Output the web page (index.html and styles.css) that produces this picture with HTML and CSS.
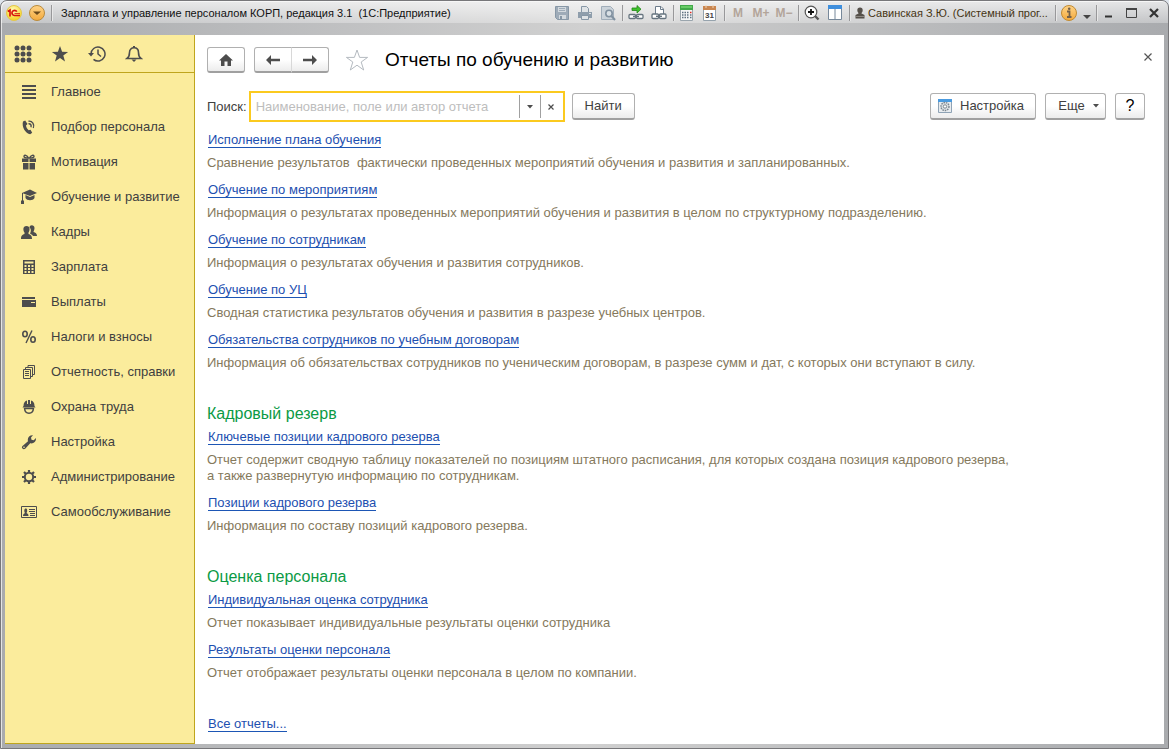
FILE: index.html
```html
<!DOCTYPE html>
<html lang="ru">

<head>
  <meta charset="utf-8">
  <title>Зарплата и управление персоналом КОРП</title>
  <link rel="stylesheet" href="styles.css">
</head>

<body>
  <div class="window">
    <header class="titlebar">
      <button class="tb-btn" aria-label="1С">
        <svg width="16" height="16" viewBox="0 0 16 16">
          <defs>
            <radialGradient id="logoFill" cx=".45" cy=".3" r=".7">
              <stop offset="0" stop-color="#fffbb8" />
              <stop offset="1" stop-color="#f6d21c" />
            </radialGradient>
            <linearGradient id="orangeFill" x1="0" y1="0" x2="0" y2="1">
              <stop offset="0" stop-color="#ffd488" />
              <stop offset="1" stop-color="#f3a93c" />
            </linearGradient>
          </defs>
          <circle cx="8" cy="8" r="7.5" fill="url(#logoFill)" stroke="#e3c64a" />
          <path d="M1.800 6.500L4 5v6.500M10.800 6.600A2.600 2.600 0 1 0 8.500 10.500H14" fill="none" stroke="#d8150f" stroke-width="1.700" />
          <path d="M8.500 8.500H14" stroke="#d8150f" stroke-width=".8" />
        </svg>
      </button>
      <button class="tb-btn" aria-label="Главное меню">
        <svg width="16" height="16" viewBox="0 0 16 16">
          <circle cx="8" cy="8" r="7.500" fill="url(#orangeFill)" stroke="#b98a3c" />
          <path d="M4 6.500h8L8 10z" fill="#6b4a1c" />
        </svg>
      </button>
      <span class="sep"></span>
      <span class="app-title">Зарплата и управление персоналом КОРП, редакция 3.1&nbsp; (1С:Предприятие)</span>

      <div class="tb-group">
        <button class="tb-btn" aria-label="Сохранить" disabled>
          <svg width="16" height="16" viewBox="0 0 16 16">
            <path d="M1.500 1.500h13v13h-11l-2-2z" fill="#9eabb8" stroke="#8797a6" />
            <path d="M4 2h8v5H4zM5 10h7v4H5z" fill="#d3d9de" />
            <path d="M5 3.500h6M5 5.500h6" stroke="#9eabb8" />
            <path d="M6 11h2v3H6z" fill="#8797a6" />
          </svg>
        </button>
        <button class="tb-btn" aria-label="Печать" disabled>
          <svg width="16" height="16" viewBox="0 0 16 16">
            <path d="M4.500 7V1.500h5l2 2V7" fill="#dfe3e6" stroke="#8797a6" />
            <path d="M1 7h14v6H1z" fill="#8f9eac" />
            <path d="M4.500 10.500h7v4h-7z" fill="#dfe3e6" stroke="#8797a6" />
            <path d="M12 8.500h2" stroke="#dfe3e6" />
          </svg>
        </button>
        <button class="tb-btn" aria-label="Предварительный просмотр" disabled>
          <svg width="16" height="16" viewBox="0 0 16 16">
            <path d="M1.500 1.500h9l3 3v10h-12z" fill="#cbd3da" stroke="#a0adb9" />
            <circle cx="9" cy="8.500" r="3.200" fill="#d9e0e5" stroke="#8191a0" stroke-width="1.600" />
            <path d="M11.500 11l3.500 4" stroke="#8191a0" stroke-width="2" />
          </svg>
        </button>
      </div>
      <span class="sep"></span>
      <div class="tb-group">
        <button class="tb-btn" aria-label="Получить ссылку">
          <svg width="16" height="16" viewBox="0 0 16 16">
            <path d="M4 3h5V.5L13 4.200 9 8V5.500H4z" fill="#3fc32d" stroke="#23851a" stroke-width=".8" />
            <rect x="1" y="9.500" width="6.500" height="4" rx="1" fill="#fff" stroke="#66747f" stroke-width="1.300" />
            <rect x="8.500" y="9.500" width="6.500" height="4" rx="1" fill="#fff" stroke="#66747f" stroke-width="1.300" />
            <path d="M5 11.500h6" stroke="#66747f" stroke-width="1.400" />
          </svg>
        </button>
        <button class="tb-btn" aria-label="Перейти по ссылке">
          <svg width="16" height="16" viewBox="0 0 16 16">
            <path d="M4.500 9V1.500h5.500l2.500 2.500v5" fill="#fff" stroke="#6d7c8b" />
            <path d="M9.500 1.500v3h3" fill="none" stroke="#6d7c8b" />
            <rect x="1" y="9" width="6.500" height="4.500" rx="1" fill="#fff" stroke="#66747f" stroke-width="1.300" />
            <rect x="8.500" y="9" width="6.500" height="4.500" rx="1" fill="#fff" stroke="#66747f" stroke-width="1.300" />
            <path d="M5 11.300h6" stroke="#66747f" stroke-width="1.400" />
          </svg>
        </button>
      </div>
      <span class="sep"></span>
      <div class="tb-group">
        <button class="tb-btn" aria-label="Калькулятор">
          <svg width="16" height="16" viewBox="0 0 16 16">
            <path d="M1.500.5h12v15h-12z" fill="#f4f6f7" stroke="#9aa5ad" />
            <path d="M1 0h13v5H1z" fill="#43a94b" />
            <path d="M2 1h11v2H2z" fill="#67cc66" />
            <path d="M3 7.500h7M3 10h7M3 12.500h7" stroke="#5f7282" stroke-width="1.500" stroke-dasharray="1.500 1" />
            <path d="M11 7.500h1.500" stroke="#e02b20" stroke-width="1.500" />
            <path d="M11 10h1.500M11 12.500h1.500" stroke="#5f7282" stroke-width="1.500" />
          </svg>
        </button>
        <button class="tb-btn" aria-label="Календарь">
          <svg width="16" height="16" viewBox="0 0 16 16">
            <path d="M1.500 1.500h12v14h-12z" fill="#fff" stroke="#96a3ad" />
            <path d="M1 1h13v4H1z" fill="#c98650" />
            <path d="M4 0v3M11 0v3" stroke="#f0d3b4" />
            <text x="3" y="13" class="cal-day">31</text>
          </svg>
        </button>
      </div>
      <span class="sep"></span>
      <div class="tb-group memory">
        <button class="tb-btn" disabled>M</button>
        <button class="tb-btn" disabled>M+</button>
        <button class="tb-btn" disabled>M−</button>
      </div>
      <span class="sep"></span>
      <div class="tb-group">
        <button class="tb-btn" aria-label="Масштаб">
          <svg width="16" height="16" viewBox="0 0 16 16">
            <circle cx="7" cy="7" r="5.800" fill="#fff" stroke="#555" stroke-width="1.200" />
            <path d="M4 7h6M7 4v6" stroke="#111" stroke-width="1.800" />
            <path d="M11 11l3.500 3.500" stroke="#555" stroke-width="2.400" />
          </svg>
        </button>
        <button class="tb-btn" aria-label="Панели">
          <svg width="16" height="16" viewBox="0 0 16 16">
            <path d="M1.500 1.500h13v13h-13z" fill="#fff" stroke="#77889a" />
            <path d="M1 0h14v4H1z" fill="#3f8fdd" />
            <path d="M8 4v11" stroke="#77889a" />
          </svg>
        </button>
      </div>
      <span class="sep"></span>
      <button class="user">
        <svg width="10" height="12" viewBox="0 0 10 12">
          <path d="M5 .5a2.700 2.700 0 0 1 2.700 2.700C7.700 5 6.500 5.500 6.500 6.500L9.500 8v3.500H.5V8l3-1.500C3.500 5.500 2.300 5 2.300 3.200A2.700 2.700 0 0 1 5 .5z" fill="#55504a" />
          <path d="M1 9.500h8" stroke="#8b8680" />
        </svg>
        <span class="user-name">Савинская З.Ю. (Системный прог...</span>
      </button>
      <span class="sep"></span>
      <button class="tb-btn" aria-label="Информация">
        <svg width="16" height="16" viewBox="0 0 16 16">
          <circle cx="8" cy="8" r="7.500" fill="url(#orangeFill)" stroke="#c08a32" />
          <path d="M6 6.500h2.500v5M6 12h4.500" fill="none" stroke="#74614a" stroke-width="1.800" />
          <circle cx="8.200" cy="3.800" r="1.300" fill="#74614a" />
        </svg>
      </button>
      <button class="tb-btn small" aria-label="Ещё">
        <svg width="10" height="16" viewBox="0 0 10 16">
          <path d="M1 10h8L5 14z" fill="#444" />
        </svg>
      </button>
      <span class="sep"></span>
      <div class="tb-group win-controls">
        <button class="tb-btn" aria-label="Свернуть">
          <svg width="16" height="16" viewBox="0 0 16 16">
            <path d="M5 11.500h7" stroke="#333" stroke-width="2" />
          </svg>
        </button>
        <button class="tb-btn" aria-label="Развернуть">
          <svg width="16" height="16" viewBox="0 0 16 16">
            <path d="M3.500 3.500h10v9h-10z" fill="none" stroke="#444" />
            <path d="M3 4h11" stroke="#444" stroke-width="2" />
          </svg>
        </button>
        <button class="tb-btn" aria-label="Закрыть окно">
          <svg width="16" height="16" viewBox="0 0 16 16">
            <path d="M4 4l8 8M12 4l-8 8" stroke="#333" stroke-width="2.200" />
          </svg>
        </button>
      </div>
    </header>

    <div class="workspace">
      <aside class="sidebar">
        <div class="quick">
          <button aria-label="Меню функций">
            <svg width="18" height="18" viewBox="0 0 18 18" fill="#4d4d4d">
              <circle cx="3" cy="3" r="2.500" /><circle cx="9" cy="3" r="2.500" /><circle cx="15" cy="3" r="2.500" />
              <circle cx="3" cy="9" r="2.500" /><circle cx="9" cy="9" r="2.500" /><circle cx="15" cy="9" r="2.500" />
              <circle cx="3" cy="15" r="2.500" /><circle cx="9" cy="15" r="2.500" /><circle cx="15" cy="15" r="2.500" />
            </svg>
          </button>
          <button aria-label="Избранное">
            <svg width="18" height="18" viewBox="0 0 18 18">
              <path d="M9 1l2.100 5.700 6 .2-4.800 3.700L14 16.500 9 13l-5 3.500 1.700-5.900L.9 6.900l6-.2z" fill="#4d4d4d" />
            </svg>
          </button>
          <button aria-label="История">
            <svg width="18" height="18" viewBox="0 0 18 18" fill="none" stroke="#4d4d4d" stroke-width="1.500">
              <path d="M3 9a7 7 0 1 1 2.500 5.400" />
              <path d="M10 4.500V9l3 2.500" />
              <path d="M0 8h6L3 11.500z" fill="#4d4d4d" stroke="none" />
            </svg>
          </button>
          <button aria-label="Оповещения">
            <svg width="18" height="18" viewBox="0 0 18 18" fill="none" stroke="#4d4d4d" stroke-width="1.600">
              <path d="M2 13.500c2-1.500 2.500-3 2.500-6C4.500 4.500 6.500 2.800 9 2.800s4.500 1.700 4.500 4.700c0 3 .5 4.500 2.500 6z" />
              <path d="M9 1v2" stroke-width="2" />
              <path d="M6.500 14.500h5L9 17z" fill="#4d4d4d" stroke="none" />
            </svg>
          </button>
        </div>
        <nav class="sections">
          <a href="#">
            <svg width="16" height="16" viewBox="0 0 16 16"><path d="M1 2h14M1 6h14M1 10h14M1 14h14" stroke="#4d4d4d" stroke-width="2" /></svg>
            Главное
          </a>
          <a href="#">
            <svg width="16" height="16" viewBox="0 0 16 16">
              <path d="M2 2.500L4.200 1.500 6.500 5 5 6.500c.3 2 1.300 3.700 2.700 4.700l1.800-.5 1.700 3-2 1.600C4.500 14.500.5 8 2 2.500z" fill="#4d4d4d" />
              <path d="M7.500 2.200c3.800-.6 6.300 3.200 4.800 6.800M7.500 4.800c2.200-.2 3.200 1.600 2.400 3.400" fill="none" stroke="#4d4d4d" stroke-width="1.400" />
            </svg>
            Подбор персонала
          </a>
          <a href="#">
            <svg width="16" height="16" viewBox="0 0 16 16">
              <path d="M1 4.500h6.500V8H1zM8.500 4.500H15V8H8.500zM2 9h5.500v6.500H2zM8.500 9H14v6.500H8.500z" fill="#4d4d4d" />
              <path d="M7.500 4C6 1 3 .5 3 2.500 3 3.500 5 4 7.500 4zM8.500 4C10 1 13 .5 13 2.500 13 3.500 11 4 8.500 4z" fill="none" stroke="#4d4d4d" stroke-width="1.400" />
            </svg>
            Мотивация
          </a>
          <a href="#">
            <svg width="16" height="16" viewBox="0 0 16 16">
              <path d="M1 4l8-3.500L16 4 9 7z" fill="#4d4d4d" />
              <path d="M4.500 6L9 8l4.500-2v3c-1.500 3-7.500 3-9 0z" fill="#4d4d4d" />
              <path d="M1.500 4v8" stroke="#4d4d4d" />
              <path d="M0 11.500h3V15H0z" fill="#4d4d4d" />
            </svg>
            Обучение и развитие
          </a>
          <a href="#">
            <svg width="16" height="16" viewBox="0 0 16 16" fill="#4d4d4d">
              <path d="M8.500 3.500C8.500.5 13.500.5 13.500 4c0 2-1 3-1 4 2 .8 3.500 1.500 3.500 4h-4c-1-1.500-2-2-3-2.500C10 8 10.500 5 8.500 3.500z" />
              <path d="M5.500 2C9.500 2 9 6.500 7.500 8.500v1.500c2 .7 3.500 1.500 3.500 5H0c0-3.500 1.500-4.300 3.500-5V8.500C2 6.500 1.500 2 5.500 2z" />
            </svg>
            Кадры
          </a>
          <a href="#">
            <svg width="16" height="16" viewBox="0 0 16 16">
              <path d="M2 1h12v14H2z" fill="#4d4d4d" />
              <path d="M3.500 2.500h9v2h-9zM3.500 6h2v2h-2zM7 6h2v2H7zM10.500 6h2v2h-2zM3.500 9h2v2h-2zM7 9h2v2H7zM10.500 9h2v2h-2zM3.500 12h2v2h-2zM7 12h2v2H7zM10.500 12h2v2h-2z" fill="#fbec9c" />
            </svg>
            Зарплата
          </a>
          <a href="#">
            <svg width="16" height="16" viewBox="0 0 16 16">
              <path d="M1 3h13v2H1zM1 6h14v7H1z" fill="#4d4d4d" />
              <path d="M10 8h4v1h-4z" fill="#fbec9c" />
            </svg>
            Выплаты
          </a>
          <a href="#">
            <svg width="16" height="16" viewBox="0 0 16 16" fill="none" stroke="#4d4d4d">
              <ellipse cx="4" cy="5" rx="2.200" ry="2.800" stroke-width="1.600" />
              <ellipse cx="12" cy="10.500" rx="2.200" ry="2.800" stroke-width="1.600" />
              <path d="M11 1.500L5 14" stroke-width="1.400" />
            </svg>
            Налоги и взносы
          </a>
          <a href="#">
            <svg width="16" height="16" viewBox="0 0 16 16" fill="none" stroke="#4d4d4d">
              <path d="M2.500 5.500h7v9h-7zM4.500 5V3.500h7v9H10M7 3V1.500h6.500v9H12" />
              <path d="M4 7.500h4M4 9.500h4M4 11.500h4" />
            </svg>
            Отчетность, справки
          </a>
          <a href="#">
            <svg width="16" height="16" viewBox="0 0 16 16">
              <path d="M2.500 7C2.500 3.500 4 2 6 1.500V5h1V1h2v4h1V1.500c2 .5 3.500 2 3.500 5.500l1 1.500h-13z" fill="#4d4d4d" />
              <path d="M3.500 9c.5 7 8.500 7 9 0M3.500 9.500h9" fill="none" stroke="#4d4d4d" stroke-width="1.500" />
            </svg>
            Охрана труда
          </a>
          <a href="#">
            <svg width="16" height="16" viewBox="0 0 16 16">
              <path d="M1.500 12L7 7.300C6 4 8.500 1 12 1.300L10 3.500l.5 2.200 2.200.5L15 4c.3 3.500-2.300 6-5.800 5.300L4.200 14.700c-2 1.500-4.500-.9-2.700-2.700z" fill="#4d4d4d" />
              <circle cx="3" cy="13.200" r=".8" fill="#fbec9c" />
            </svg>
            Настройка
          </a>
          <a href="#">
            <svg width="16" height="16" viewBox="0 0 16 16" fill="none" stroke="#4d4d4d">
              <circle cx="8" cy="8" r="4.200" stroke-width="2" />
              <path d="M8 1v3M8 12v3M1 8h3M12 8h3M3 3l2 2M11 11l2 2M13 3l-2 2M5 11l-2 2" stroke-width="2.200" />
            </svg>
            Администрирование
          </a>
          <a href="#">
            <svg width="16" height="16" viewBox="0 0 16 16">
              <path d="M.5 2.500h15v11H.5z" fill="none" stroke="#4d4d4d" />
              <path d="M2 12c0-2 1-2.500 2-3-1-1.500-1-4.500.8-4.500S6.500 7.500 5.500 9c1 .5 2 1 2 3z" fill="#4d4d4d" />
              <path d="M8 5.500h6M8 7.500h6M9 9.500h5M9 11.500h5" stroke="#4d4d4d" />
            </svg>
            Самообслуживание
          </a>
        </nav>
      </aside>

      <main class="page">
        <div class="page-head">
          <button class="btn nav-btn" aria-label="Начальная страница">
            <svg width="16" height="14" viewBox="0 0 16 14"><path d="M8 1L1 7.500h2V13h3.500V8.500h3V13H13V7.500h2z" fill="#4d4d4d" /></svg>
          </button>
          <div class="nav-pair">
            <button class="btn nav-btn" aria-label="Назад">
              <svg width="16" height="14" viewBox="0 0 16 14"><path d="M1 7l5-5v3.800h9v2.400H6V12z" fill="#4d4d4d" /></svg>
            </button>
            <button class="btn nav-btn" aria-label="Вперед">
              <svg width="16" height="14" viewBox="0 0 16 14"><path d="M15 7l-5-5v3.800H1v2.400h9V12z" fill="#4d4d4d" /></svg>
            </button>
          </div>
          <button class="plain star" aria-label="В избранное">
            <svg width="24" height="24" viewBox="0 0 24 24"><path d="M12 2l2.600 7.400h8L16.200 14l2.500 8L12 17.200 5.300 22l2.500-8L1.400 9.400h8z" fill="#fff" stroke="#b4bac0" /></svg>
          </button>
          <h1>Отчеты по обучению и развитию</h1>
          <button class="plain close" aria-label="Закрыть">
            <svg width="10" height="10" viewBox="0 0 10 10"><path d="M1.500 1.500l7 7M8.500 1.500l-7 7" stroke="#555" stroke-width="1.200" /></svg>
          </button>
        </div>

        <form class="toolbar">
          <label for="search">Поиск:</label>
          <div class="search-box">
            <input id="search" type="text" placeholder="Наименование, поле или автор отчета">
            <button type="button" aria-label="Выбрать">
              <svg width="6" height="4" viewBox="0 0 6 4"><path d="M0 0h6L3 3.500z" fill="#4d4d4d" /></svg>
            </button>
            <button type="button" aria-label="Очистить">
              <svg width="6" height="6" viewBox="0 0 6 6"><path d="M.5.500l5 5M5.500.500l-5 5" stroke="#4d4d4d" stroke-width="1.200" /></svg>
            </button>
          </div>
          <button type="button" class="btn find">Найти</button>
          <div class="actions">
            <button type="button" class="btn setup">
              <svg width="14" height="14" viewBox="0 0 14 14">
                <path d="M.5.500h13v13H.5z" fill="#e8ecef" stroke="#8fa3b5" />
                <path d="M0 0h14v3H0z" fill="#4a9be0" />
                <circle cx="7" cy="7.500" r="4" fill="#dfe3e6" stroke="#7b8790" stroke-width="1.400" stroke-dasharray="1.600 .8" />
                <circle cx="7" cy="7.500" r="1.700" fill="#fff" stroke="#7b8790" />
              </svg>
              Настройка
            </button>
            <button type="button" class="btn more">
              Еще
              <svg width="6" height="4" viewBox="0 0 6 4"><path d="M0 0h6L3 3.500z" fill="#4d4d4d" /></svg>
            </button>
            <button type="button" class="btn help">?</button>
          </div>
        </form>

        <section class="reports">
          <a href="#">Исполнение плана обучения</a>
          <p>Сравнение результатов&nbsp; фактически проведенных мероприятий обучения и развития и запланированных.</p>
          <a href="#">Обучение по мероприятиям</a>
          <p>Информация о результатах проведенных мероприятий обучения и развития в целом по структурному подразделению.</p>
          <a href="#">Обучение по сотрудникам</a>
          <p>Информация о результатах обучения и развития сотрудников.</p>
          <a href="#">Обучение по УЦ</a>
          <p>Сводная статистика результатов обучения и развития в разрезе учебных центров.</p>
          <a href="#">Обязательства сотрудников по учебным договорам</a>
          <p>Информация об обязательствах сотрудников по ученическим договорам, в разрезе сумм и дат, с которых они вступают в силу.</p>
        </section>

        <section class="reports">
          <h2>Кадровый резерв</h2>
          <a href="#">Ключевые позиции кадрового резерва</a>
          <p>Отчет содержит сводную таблицу показателей по позициям штатного расписания, для которых создана позиция кадрового резерва,<br>а также развернутую информацию по сотрудникам.</p>
          <a href="#">Позиции кадрового резерва</a>
          <p>Информация по составу позиций кадрового резерва.</p>
        </section>

        <section class="reports">
          <h2>Оценка персонала</h2>
          <a href="#">Индивидуальная оценка сотрудника</a>
          <p>Отчет показывает индивидуальные результаты оценки сотрудника</p>
          <a href="#">Результаты оценки персонала</a>
          <p>Отчет отображает результаты оценки персонала в целом по компании.</p>
        </section>

        <section class="reports">
          <a href="#">Все отчеты...</a>
        </section>
      </main>
    </div>
  </div>
</body>

</html>
```

FILE: styles.css
```css
* {
  box-sizing: border-box;
}

body {
  margin: 0;
  background: #dfe5ec;
  font-family: "Liberation Sans", Arial, sans-serif;
  font-size: 13px;
  line-height: 16px;
  color: #404040;
}

button,
input {
  font: inherit;
  color: inherit;
}

button {
  display: flex;
  align-items: center;
  justify-content: center;
  padding: 0;
  border: 0;
  background: none;
}

svg {
  display: block;
  flex: none;
}

h1,
h2,
p {
  margin: 0;
  font-weight: normal;
}

/* Window frame */
.window {
  display: flex;
  flex-direction: column;
  min-height: 100vh;
  padding: 0 4px 4px;
  border: 1px solid #77777a;
  border-radius: 7px 7px 0 0;
  background: linear-gradient(90deg, #a9abae, #d0d0d0 50%, #a9abae);
  box-shadow: inset 1px 1px #e4e4e4;
}

.titlebar {
  display: flex;
  align-items: center;
  height: 22px;
  margin: 0 -4px 12px;
  padding: 2px 6px 0 5px;
  border-radius: 6px 6px 0 0;
  background: linear-gradient(rgba(255, 255, 255, 0.7), rgba(255, 255, 255, 0.3));
  font-size: 11px;
}

.tb-btn {
  width: 16px;
  height: 16px;
}

.titlebar > .tb-btn:nth-child(2) {
  margin-left: 7px;
}

.tb-btn.small {
  width: 10px;
  margin: 0 -2px 0 5px;
}

.tb-group {
  display: flex;
  gap: 7px;
}

.sep {
  width: 1px;
  height: 16px;
  margin: 0 5px 0 6px;
  background: #98989a;
  box-shadow: 1px 0 #e8e8e8;
}

.app-title {
  flex: 1;
  margin-left: 4px;
  overflow: hidden;
  white-space: nowrap;
  color: #111;
}

.memory {
  font-size: 12px;
  font-weight: bold;
  color: #b3a59a;
}

.win-controls {
  margin-left: -2px;
}

.cal-day {
  font-size: 8px;
  font-weight: bold;
  fill: #444;
}

.user {
  gap: 3px;
  color: #453413;
}

.user-name {
  width: 181px;
  white-space: nowrap;
  text-align: left;
}

/* Sections panel */
.workspace {
  display: flex;
  flex: 1;
  background: #fff;
}

.sidebar {
  flex: none;
  width: 190px;
  border: solid #bfa51d;
  border-width: 0 1px 1px 0;
  background: #fbec9c;
}

.quick {
  display: flex;
  gap: 19px;
  height: 38px;
  padding-left: 9px;
  border-bottom: 1px solid #bfa51d;
}

.sections {
  padding-top: 1px;
}

.sections a {
  display: flex;
  align-items: center;
  gap: 14px;
  height: 35px;
  padding-left: 16px;
  color: #404040;
  text-decoration: none;
  white-space: nowrap;
}

/* Page */
.page {
  flex: 1;
  min-width: 0;
  padding: 12px 19px 12px 12px;
}

.page-head {
  display: flex;
  align-items: center;
  height: 26px;
}

.btn {
  height: 27px;
  border: 1px solid #b0b0b0;
  border-bottom: 2px solid #a0a0a0;
  border-radius: 3px;
  background: linear-gradient(#fff 50%, #ececec);
}

.nav-btn {
  width: 38px;
  height: 26px;
}

.nav-pair {
  display: flex;
  margin-left: 9px;
}

.nav-pair .btn:first-child {
  border-radius: 3px 0 0 3px;
}

.nav-pair .btn:last-child {
  margin-left: -1px;
  border-left-color: #d8d8d8;
  border-radius: 0 3px 3px 0;
}

.star {
  margin-left: 16px;
}

h1 {
  margin-left: 16px;
  font-size: 19px;
  line-height: 24px;
  color: #000;
}

.close {
  align-self: flex-start;
  margin: 4px -9px 0 auto;
  padding: 1px;
}

.toolbar {
  display: flex;
  align-items: center;
  margin-top: 18px;
}

.search-box {
  display: flex;
  align-items: center;
  width: 316px;
  height: 31px;
  margin-left: 2px;
  border: 2px solid #fbca1f;
}

.search-box input {
  flex: 1;
  min-width: 0;
  height: 27px;
  padding: 0 5px;
  border: 0;
  outline: 0;
}

.search-box input::placeholder {
  color: #bdbdbd;
}

.search-box button {
  width: 21px;
  height: 23px;
  border-left: 1px solid #a0a0a0;
}

.search-box button:last-child {
  margin-right: 2px;
}

.find {
  width: 63px;
  margin-left: 7px;
}

.actions {
  display: flex;
  gap: 9px;
  margin-left: auto;
}

.setup {
  justify-content: flex-start;
  gap: 8px;
  width: 106px;
  padding-left: 7px;
}

.more {
  gap: 8px;
  width: 61px;
  padding-left: 6px;
}

.help {
  width: 30px;
  font-size: 16px;
  color: #000;
}

/* Reports */
.reports {
  display: flex;
  flex-direction: column;
  align-items: flex-start;
  margin-bottom: 35px;
}

.toolbar + .reports {
  margin-top: 10px;
}

.reports:last-child {
  margin-bottom: 0;
}

.reports a {
  height: 16px;
  margin-left: 1px;
  border-bottom: 1px solid #1d56b5;
  color: #1d4fb0;
  text-decoration: none;
}

.reports p {
  margin: 7px 0 11px;
  color: #85795c;
}

.reports p:last-child {
  margin-bottom: 0;
}

h2 {
  margin: -2px 0 5px;
  font-size: 16px;
  line-height: 20px;
  color: #0b9a45;
}
```
